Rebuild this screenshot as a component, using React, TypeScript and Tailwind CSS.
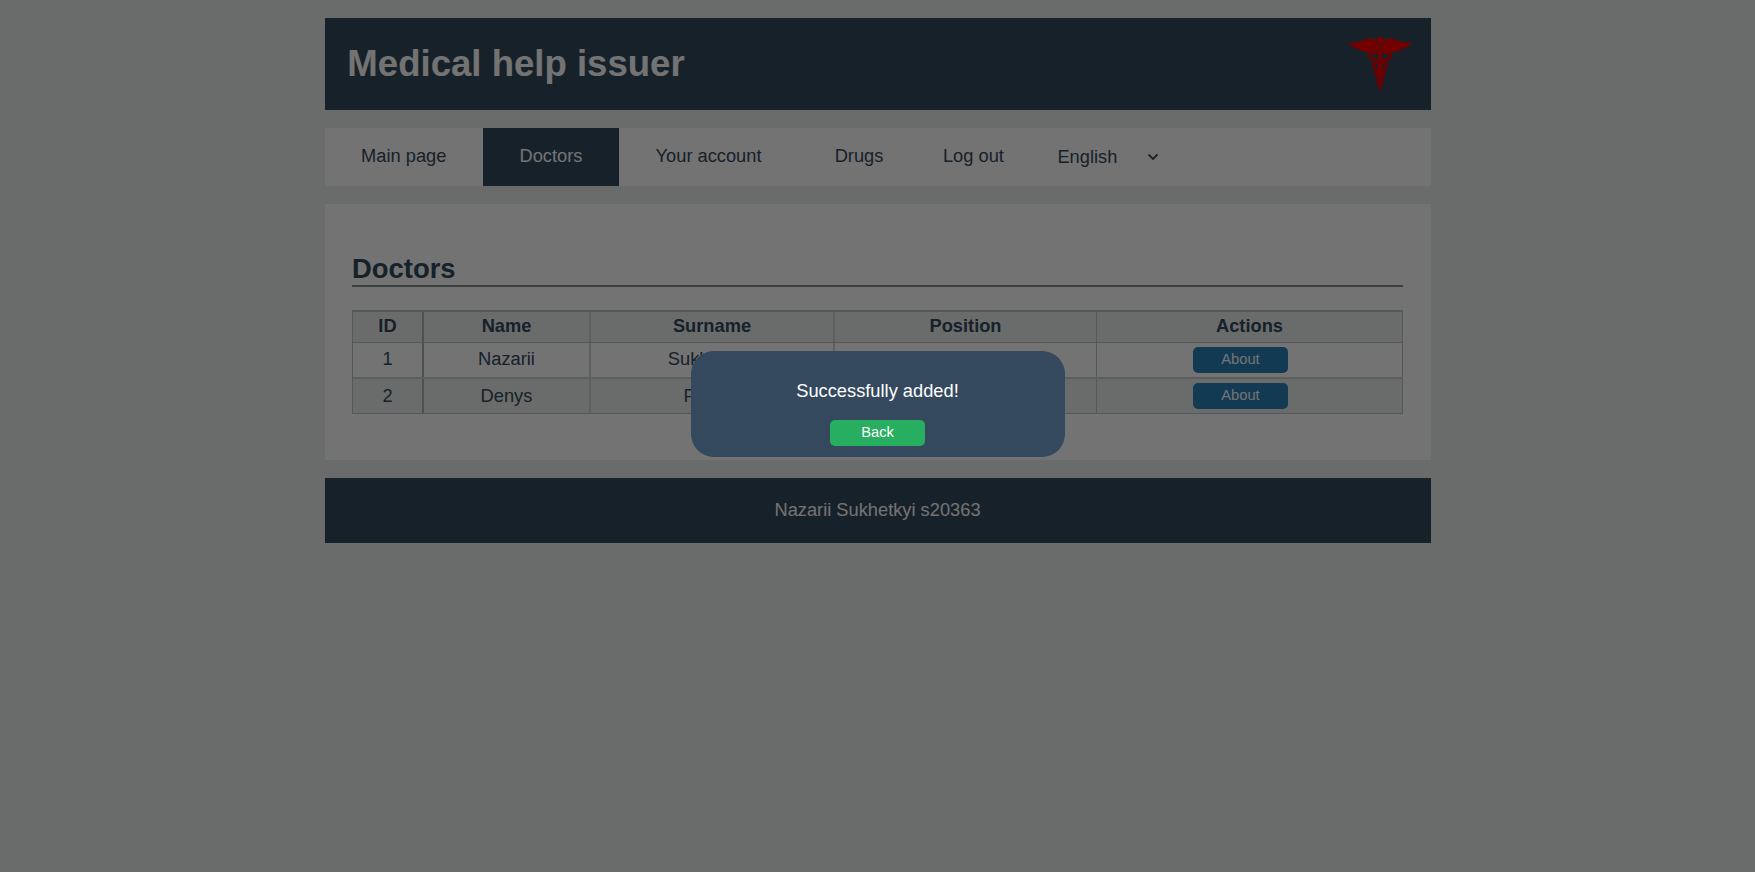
const doctors = [
  { id: 1, name: "Nazarii", surname: "Sukhetskyi", row: "h-[36px] border-b-2 border-[#cdd2d3] bg-white", cell: "pt-[5px]" },
  { id: 2, name: "Denys", surname: "Pietrov", row: "h-[35px] border-b border-[#bdc3c7] bg-[#ebf0ee]", cell: "pt-[6px]" },
];

const columns = "grid grid-cols-[71px_167px_244px_262px_306px] text-center";

function Caduceus() {
  return (
    <svg className="mb-[1px] h-[70px] w-[76px]" viewBox="0 0 76 70">
      <g fill="#ff0000">
        <path d="M5.700 13.800C12 14 17 12.800 21 11.200c4-1.700 7-2.600 9.500-1.600 2.500.9 4 2.500 5 4.500.3 1.500 1.300 5.500 1 8-3 1.800-6 2.200-9 1.700-4-.6-7-1.400-10-2.800-4-1.800-8-3.500-11.800-7.200z" />
        <path d="M70.500 13.800C64.200 14 59.200 12.800 55.200 11.200c-4-1.700-7-2.600-9.500-1.600-2.500.9-4 2.500-5 4.500-.3 1.500-1.300 5.500-1 8 3 1.800 6 2.200 9 1.700 4-.6 7-1.400 10-2.800 4-1.800 8-3.500 11.800-7.200z" />
        <circle cx="38.100" cy="10.800" r="3.300" />
        <path d="M36.600 12h3l.5 32-.6 12-1.400 9-1.400-9-.6-12z" />
      </g>
      <g fill="none" stroke="#e80006" strokeWidth="3.2" strokeLinecap="round">
        <path d="M36.500 23.500c-5-.5-8.500.5-8.500 3.200 0 4 5.500 4.300 10.100 5.600 4.600 1.300 6.900 2 6.900 4.200 0 2.500-3.500 3.200-6.900 4.500-3 1.100-4.600 1.800-4.600 3.500 0 2 2.600 2.500 4.600 4 1.900 1.400 2.400 2.500 1.900 4.500-.3 1.500-1.200 3-1.900 4.500" />
        <path d="M39.700 23.500c5-.5 8.500.5 8.500 3.200 0 4-5.500 4.300-10.100 5.600-4.600 1.300-6.900 2-6.900 4.200 0 2.500 3.500 3.200 6.900 4.500 3 1.100 4.600 1.800 4.600 3.500 0 2-2.600 2.500-4.600 4-1.900 1.400-2.400 2.500-1.900 4.500.3 1.500 1.200 3 1.900 4.500" />
      </g>
    </svg>
  );
}

export default function App() {
  return (
    <div className="relative h-[872px] overflow-hidden bg-[#ebf0ee] pt-[18px] font-['Liberation_Sans',Arial,sans-serif] text-[18.286px] leading-[21px] text-[#34495e]">
      <div className="mx-auto w-[1106px]">
        <header className="flex h-[92px] items-center justify-between bg-[#34495e] pl-[22.86px] pr-[12.5px] text-white">
          <h1 className="pb-[1px] text-[36.57px] font-bold leading-[41px]">Medical help issuer</h1>
          <Caduceus />
        </header>

        <nav className="mt-[18px] flex h-[57.5px] bg-white">
          <a className="px-[36.57px] pt-[17px]">Main page</a>
          <a className="bg-[#34495e] px-[36.57px] pt-[17px] text-white">Doctors</a>
          <a className="px-[36.57px] pt-[17px]">Your account</a>
          <a className="px-[36.57px] pt-[17px]">Drugs</a>
          <a className="pl-[23px] pt-[17px]">Log out</a>
          <div className="flex pl-[53.5px] pt-[18px]">
            <span className="w-[91px]">English</span>
            <svg className="mt-[6px] h-[10px] w-[10px]" viewBox="0 0 10 10" fill="none" stroke="currentColor" strokeWidth="1.8">
              <path d="M.5 2.500 5 7 9.500 2.500" />
            </svg>
          </div>
        </nav>

        <main className="mt-[18.5px] h-[256px] bg-white px-[27.5px] pt-[50px]">
          <h2 className="h-[33px] border-b-2 border-[#7f8c8d] text-[27.43px] font-bold leading-[30px]">Doctors</h2>
          <div className="mt-[23px] w-[1051px] border-l border-t-2 border-[#bdc3c7]">
            <div className={`${columns} h-[31px] border-b border-[#bdc3c7] bg-[#ebf0ee] font-bold`}>
              <div className="border-r-2 border-[#a9b1b5] pt-[3px]">ID</div>
              <div className="border-r-2 border-[#d0d5d6] pt-[3px]">Name</div>
              <div className="border-r-2 border-[#d0d5d6] pt-[3px]">Surname</div>
              <div className="border-r border-[#bdc3c7] pt-[3px]">Position</div>
              <div className="border-r border-[#bdc3c7] pt-[3px]">Actions</div>
            </div>
            {doctors.map((d) => (
              <div key={d.id} className={`${columns} ${d.row}`}>
                <div className={`border-r-2 border-[#a9b1b5] ${d.cell}`}>{d.id}</div>
                <div className={`border-r-2 border-[#d0d5d6] ${d.cell}`}>{d.name}</div>
                <div className={`border-r-2 border-[#d0d5d6] ${d.cell}`}>{d.surname}</div>
                <div className="border-r border-[#bdc3c7]" />
                <div className="flex justify-center border-r border-[#bdc3c7] pr-[18px] pt-[4px]">
                  <button className="h-[26px] w-[95px] rounded-[5px] bg-[#2980b9] pb-[1px] text-[14.7px] leading-[25px] text-white">
                    About
                  </button>
                </div>
              </div>
            ))}
          </div>
        </main>

        <footer className="mt-[18px] h-[65px] bg-[#34495e] pt-[21px] text-center text-white">
          Nazarii Sukhetkyi s20363
        </footer>
      </div>

      <div className="absolute inset-0 bg-black/55">
        <div className="mx-auto mt-[351px] flex h-[106px] w-[374px] flex-col items-center rounded-[23px] bg-[#34495e] pt-[29px] text-white">
          <p>Successfully added!</p>
          <button className="mt-[19px] h-[26px] w-[95px] rounded-[5px] bg-[#27ae60] pb-[1px] text-[14.7px] leading-[25px]">
            Back
          </button>
        </div>
      </div>
    </div>
  );
}
